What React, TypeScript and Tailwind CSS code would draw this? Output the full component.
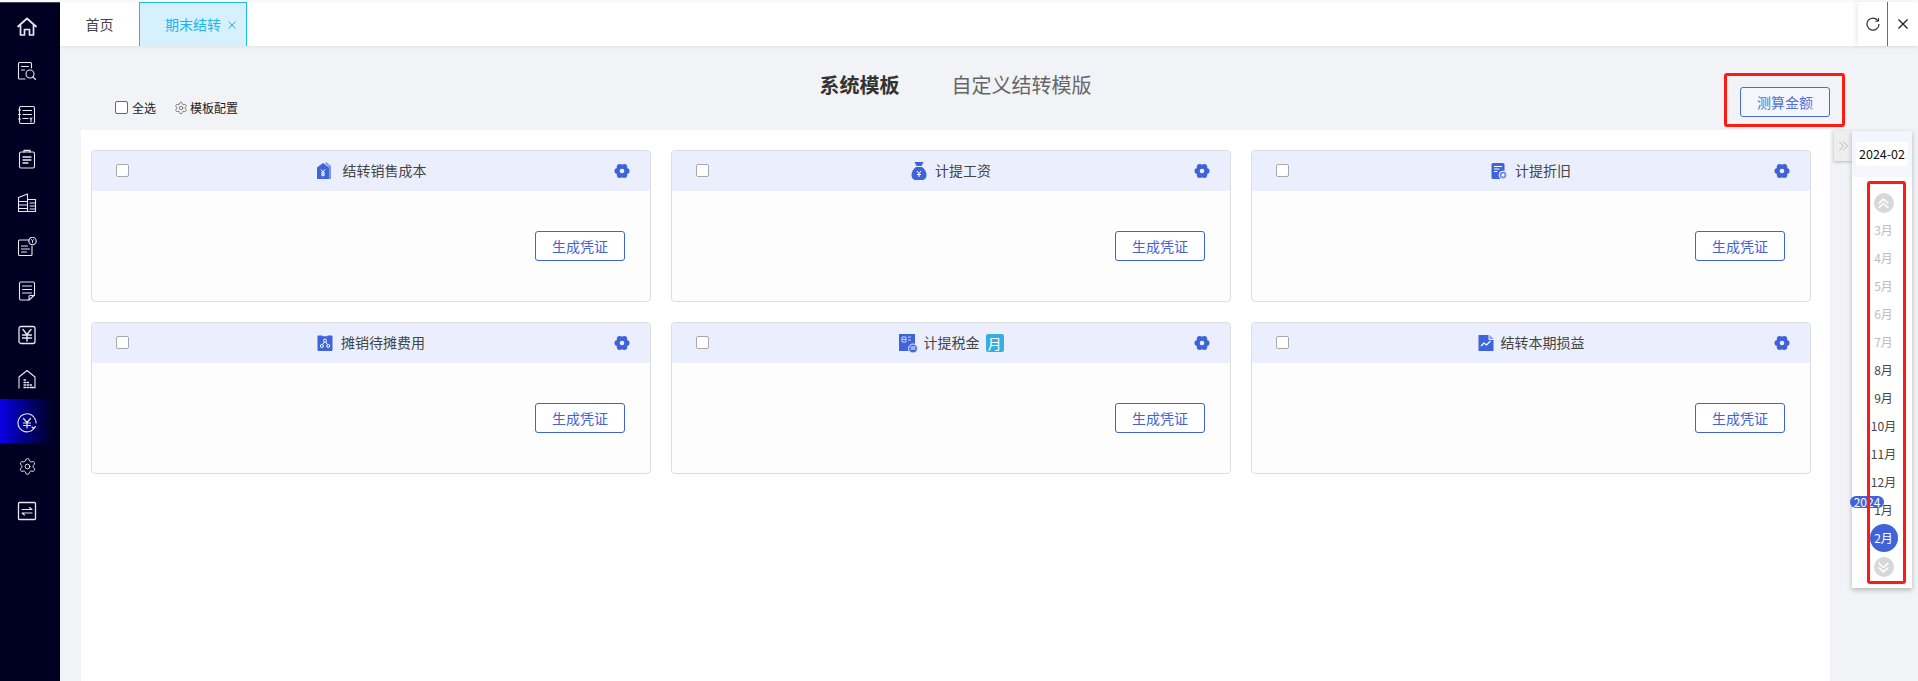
import React from "react";
import { Settings } from "lucide-react";

const FONT = "[font-family:'Noto_Sans_CJK_SC','Noto_Sans',sans-serif]";

type IconProps = { className?: string };

const Stroke: React.FC<{ children: React.ReactNode; className?: string }> = ({ children, className }) => (
  <svg viewBox="0 0 20 20" fill="none" stroke="currentColor" strokeWidth="1.1" strokeLinecap="round" strokeLinejoin="round" className={className ?? "w-5 h-5"}>
    {children}
  </svg>
);

const NavHome = () => (
  <svg viewBox="0 0 20 20" fill="none" stroke="currentColor" strokeWidth="1.7" strokeLinejoin="round" strokeLinecap="round" className="w-5 h-5">
    <path d="M1 9.500 10 1.500l9 8M3.500 8v10h4v-5.500h5V18h4V8" />
  </svg>
);
const NavSearchDoc = () => (
  <Stroke>
    <path d="M8 18H2.500a1 1 0 0 1-1-1V2.500a1 1 0 0 1 1-1h11a1 1 0 0 1 1 1V7" />
    <path d="M4.500 5.500h7M4.500 9h3" />
    <circle cx="13" cy="13" r="4" />
    <path d="m16 16 2.500 2.500" />
  </Stroke>
);
const NavLedger = () => (
  <Stroke>
    <rect x="2.500" y="1.500" width="15" height="17" rx="1.500" />
    <path d="M1.500 5h2M1.500 9.500h2M1.500 14h2M6 5.500h8.500M6 9.500h8.500M6 13.500h5M13 13l1 1.500 1-1.500M14 14.500V17" />
  </Stroke>
);
const NavClipboard = () => (
  <Stroke>
    <rect x="2.500" y="3" width="15" height="16" rx="1.500" />
    <path d="M7 3V1.500h6V3M6 8h8M6 11h8M6 14h5" strokeWidth="1.300" />
  </Stroke>
);
const NavBuilding = () => (
  <Stroke>
    <path d="M1.500 18.500V4.500L10.500 1v17.500M10.500 6.500h8v12h-17" />
    <path d="M1.500 8.500h9M1.500 12h9M1.500 15.500h9M13 10h5.500M13 13h5.500M13 16h5.500" />
  </Stroke>
);
const NavDocCoin = () => (
  <Stroke>
    <path d="M12 3H2.500a1 1 0 0 0-1 1v13.500a1 1 0 0 0 1 1H14a1 1 0 0 0 1-1V9" />
    <path d="M4.500 9h6M4.500 12h8M4.500 15h5" />
    <circle cx="15.500" cy="4" r="3.700" />
    <path d="M14.500 2.500l1 1.300 1-1.300M15.500 3.800v2" strokeWidth="0.900" />
  </Stroke>
);
const NavNote = () => (
  <Stroke>
    <path d="M12 19H4a1.500 1.500 0 0 1-1.500-1.500v-15A1.500 1.500 0 0 1 4 1h12a1.500 1.500 0 0 1 1.500 1.500V14L12 19Z" />
    <path d="M5.500 5h9M5.500 8.500h9M5.500 12h9M12 19v-3.500a1 1 0 0 1 1-1h4.500" />
  </Stroke>
);
const NavYenBox = () => (
  <Stroke>
    <rect x="2" y="1.500" width="16" height="17" rx="2" strokeWidth="1.300" />
    <path d="m6 4.500 4 5 4-5M10 9.500V16M5.500 10h9M5.500 13h9" strokeWidth="1.400" />
  </Stroke>
);
const NavHouse = () => (
  <Stroke>
    <path d="M2 19V8l8-6.500L18 8v11" />
    <path d="M7 11h1.500M7 13.500h1.500M7 16h1.500M7 18.500h1.500M10 13.500h1.500M10 16h1.500M10 18.500h1.500M13 16h1.500M13 18.500h4" strokeWidth="1.300" />
  </Stroke>
);
const NavYenCircle = () => (
  <Stroke>
    <path d="M17 15.500A9 9 0 1 1 19 10" strokeDasharray="16 1 30 1 40" />
    <path d="m6.500 5.500 3.500 4 3.500-4M10 9.500V15M6.500 10h7M6.500 12.500h7" strokeWidth="1.200" />
    <path d="m15 14 1.500 1.500 2-2" />
  </Stroke>
);
const NavGear = () => <Settings className="w-[19px] h-[19px]" strokeWidth={1.200} />;
const NavSwap = () => (
  <Stroke>
    <rect x="1.500" y="1.500" width="17" height="17" rx="1" strokeWidth="1.300" />
    <path d="M5 8.500h10l-2.500-2M15 12H5l2.500 2" strokeWidth="1.100" />
  </Stroke>
);

const NAV_ITEMS = [NavHome, NavSearchDoc, NavLedger, NavClipboard, NavBuilding, NavDocCoin, NavNote, NavYenBox, NavHouse, NavYenCircle, NavGear, NavSwap];

const Sidebar = () => (
  <aside className="w-[60px] shrink-0 bg-[#000022] text-[#e8e8f0] border-t border-t-[#44445a] mt-[2px]">
    {NAV_ITEMS.map((Icon, index) => (
      <div
        key={index}
        className={`h-[44px] flex items-center justify-center pr-[6px] pt-[3px] ${index === 9 ? "bg-gradient-to-r from-[#0c00e8] to-[#000022] to-90%" : ""}`}
      >
        <Icon />
      </div>
    ))}
  </aside>
);

const TabBar = () => (
  <div className="mt-[2px] h-[44px] bg-white flex items-stretch shadow-[0_1px_3px_rgba(0,0,0,0.08)] relative z-10">
    <div className="w-[79px] flex items-center justify-center text-[14px] text-[#444]">首页</div>
    <div className="w-[108px] flex items-center pl-[25px] gap-[6px] bg-[#d6f1fd] border border-b-0 border-[#19bdf0] text-[14px] text-[#22b4ee]">
      期末结转
      <svg viewBox="0 0 10 10" className="w-[10px] h-[10px]" fill="none" stroke="currentColor" strokeWidth="1">
        <path d="m1.500 1.500 7 7M8.500 1.500l-7 7" />
      </svg>
    </div>
    <div className="ml-auto flex shadow-[-3px_0_4px_rgba(0,0,0,0.06)]">
      <div className="w-[30px] flex items-center justify-center border-r border-r-[#4a6bd8] text-[#333]">
        <svg viewBox="0 0 14 14" className="w-[14px] h-[14px]" fill="none" stroke="currentColor" strokeWidth="1.200">
          <path d="M12 3.800A6 6 0 1 0 13 7" />
          <path d="M12.500 1v3.200H9.300" strokeWidth="1" />
        </svg>
      </div>
      <div className="w-[30px] flex items-center justify-center text-[#222]">
        <svg viewBox="0 0 12 12" className="w-[12px] h-[12px]" fill="none" stroke="currentColor" strokeWidth="1.300">
          <path d="m1.500 1.500 9 9M10.500 1.500l-9 9" />
        </svg>
      </div>
    </div>
  </div>
);

const CardGear = () => (
  <svg viewBox="0 0 16 16" className="w-[16px] h-[16px]">
    <g fill="#3f63d9">
      <circle cx="12.500" cy="8" r="3" />
      <circle cx="10.250" cy="11.900" r="3" />
      <circle cx="5.750" cy="11.900" r="3" />
      <circle cx="3.500" cy="8" r="3" />
      <circle cx="5.750" cy="4.100" r="3" />
      <circle cx="10.250" cy="4.100" r="3" />
      <circle cx="8" cy="8" r="4" />
    </g>
    <circle cx="8" cy="8" r="2.300" fill="#ebeffd" />
  </svg>
);

const TagIcon = ({ className }: IconProps) => (
  <svg viewBox="0 0 16 18" className={className}>
    <path fill="#7f98e8" d="M10 0l5 4v13h-2V5L9 1.500z" />
    <path fill="#3f63d9" d="M7 1l6 4.500V17H1V5.500z" />
    <path fill="none" stroke="#fff" strokeWidth="1" d="m5 7.500 2 2.500 2-2.500M7 10v4.500M5 11h4M5 13h4" />
  </svg>
);
const BagIcon = ({ className }: IconProps) => (
  <svg viewBox="0 0 16 18" className={className}>
    <path fill="#3f63d9" d="M3.500 0h9L10.500 4h-5zM5 5h6c3 2 4.500 5 4.500 8 0 3-2 5-4.500 5H5c-2.500 0-4.500-2-4.500-5 0-3 1.500-6 4.500-8z" />
    <path fill="none" stroke="#fff" strokeWidth="1" d="m6 9 2 2.500L10 9M8 11.500V15M6 12.500h4" />
  </svg>
);
const ReportIcon = ({ className }: IconProps) => (
  <svg viewBox="0 0 16 16" className={className}>
    <rect x="0.500" y="0" width="13" height="16" rx="1.500" fill="#3f63d9" />
    <path stroke="#fff" strokeWidth="1" d="M3 3.500h8M3 6h5.500M3 8.500h3.500" />
    <circle cx="12" cy="12" r="4" fill="#6f8ce6" stroke="#ebeffd" strokeWidth="1" />
    <circle cx="12" cy="12" r="1.500" fill="#fff" />
  </svg>
);
const ShareIcon = ({ className }: IconProps) => (
  <svg viewBox="0 0 16 16" className={className}>
    <path fill="#3f63d9" d="M1.500 0.500h4v.8h5v-.8h4A1 1 0 0 1 15.500 1.500v13.500a1 1 0 0 1-1 1h-13a1 1 0 0 1-1-1V1.500a1 1 0 0 1 1-1z" />
    <g fill="none" stroke="#fff" strokeWidth="1">
      <circle cx="8" cy="5.500" r="1.500" />
      <circle cx="4.800" cy="11" r="1.500" />
      <circle cx="11.200" cy="11" r="1.500" />
      <path d="M7.200 7 5.600 9.600M8.800 7l1.600 2.600" />
    </g>
  </svg>
);
const TaxIcon = ({ className }: IconProps) => (
  <svg viewBox="0 0 19 19" className={className}>
    <rect x="0" y="0" width="16" height="17" fill="#3f63d9" />
    <path stroke="#c7d3f7" strokeWidth="1" fill="none" d="M3 3h4v5H3zM3 5.500h4M9 3h3M9 6h3" />
    <circle cx="14" cy="14.500" r="4.500" fill="#3f63d9" stroke="#ebeffd" strokeWidth="1" />
    <path stroke="#fff" strokeWidth="1" d="M11.500 13h5M11.500 15h5" />
  </svg>
);
const ChartIcon = ({ className }: IconProps) => (
  <svg viewBox="0 0 16 16" className={className}>
    <path fill="#3f63d9" d="M0.500 0h10v5h5v11H.500z" />
    <path fill="#7f98e8" d="M11.500 0l4 4h-4z" />
    <path fill="none" stroke="#fff" strokeWidth="1.300" d="M3 11l3-3 2.500 2 4-4" />
  </svg>
);

const Checkbox = () => (
  <span className="block w-[13px] h-[13px] rounded-[2px] bg-white border-[1.5px] border-[#a8a8a8]" />
);

const CARDS = [
  { title: "结转销售成本", Icon: TagIcon, size: "w-[16px] h-[18px]", gap: "gap-[11px]" },
  { title: "计提工资", Icon: BagIcon, size: "w-[16px] h-[18px]", gap: "gap-[8px]" },
  { title: "计提折旧", Icon: ReportIcon, size: "w-[16px] h-[16px]", gap: "gap-[8px]" },
  { title: "摊销待摊费用", Icon: ShareIcon, size: "w-[16px] h-[16px]", gap: "gap-[8px]" },
  { title: "计提税金", Icon: TaxIcon, size: "w-[19px] h-[19px]", gap: "gap-[6px]", badge: "月" },
  { title: "结转本期损益", Icon: ChartIcon, size: "w-[16px] h-[16px]", gap: "gap-[7px]" },
];

const TemplateCard: React.FC<(typeof CARDS)[number]> = ({ title, Icon, size, gap, badge }) => (
  <div className="h-[152px] rounded-[4px] border border-[#dcdde1] bg-[#fdfdfd]">
    <div className={`relative h-[40px] rounded-t-[4px] rounded-b-[3px] bg-[#ebeffd] flex items-center justify-center ${gap} text-[14px] text-[#444]`}>
      <span className="absolute left-[24px] top-[13px]">
        <Checkbox />
      </span>
      <Icon className={size} />
      <span className="pb-[2px]">{title}</span>
      {badge && (
        <span className="w-[18px] h-[18px] rounded-[2px] bg-[#36aee0] text-white flex items-center justify-center">{badge}</span>
      )}
      <span className="absolute right-[20px] top-[12px]">
        <CardGear />
      </span>
    </div>
    <div className="flex justify-end pt-[40px] pr-[25px]">
      <button className="w-[90px] h-[30px] rounded-[3px] border border-[#3f63d9] text-[14px] text-[#3f63d9] bg-white">生成凭证</button>
    </div>
  </div>
);

const PageHeader = () => (
  <div className="h-[84px] grid grid-cols-[1fr_auto_1fr] ">
    <div className="flex items-center gap-[18px] pl-[34px] pt-[39px] text-[12px] text-[#222]">
      <span className="flex items-center gap-[4px]">
        <span className="block w-[13px] h-[13px] rounded-[2px] bg-white border border-[#666]" />
        全选
      </span>
      <span className="flex items-center gap-[2px]">
        <Settings className="w-[14px] h-[14px] text-[#555]" strokeWidth={1.200} />
        模板配置
      </span>
    </div>
    <div className="flex items-start gap-[52px] pt-[24px] text-[20px] leading-[30px]">
      <span className="font-bold text-[#333]">系统模板</span>
      <span className="text-[#666]">自定义结转模版</span>
    </div>
    <div className="relative flex justify-end items-start pt-[41px]">
      <button className="w-[90px] h-[30px] rounded-[3px] border border-[#4a6bd8] text-[14px] text-[#4f72dc] bg-[#f5f6fc]">测算金额</button>
      <span className="absolute right-[-15px] top-[27px] w-[121px] h-[54px] rounded-[3px] border-[3px] border-[#ff1a12]" />
    </div>
  </div>
);

const Chevrons: React.FC<{ direction: "up" | "down" }> = ({ direction }) => (
  <span className="w-[20px] h-[20px] rounded-full bg-[#d8d8d8] flex items-center justify-center text-white">
    <svg viewBox="0 0 12 12" className="w-[13px] h-[13px]" fill="none" stroke="currentColor" strokeWidth="1.500">
      <path d={direction === "up" ? "M1.500 6 6 2l4.500 4M1.500 10 6 6l4.500 4" : "M1.500 2 6 6l4.500-4M1.500 6 6 10l4.500-4"} />
    </svg>
  </span>
);

const MONTHS = [
  { label: "3月", disabled: true },
  { label: "4月", disabled: true },
  { label: "5月", disabled: true },
  { label: "6月", disabled: true },
  { label: "7月", disabled: true },
  { label: "8月" },
  { label: "9月" },
  { label: "10月" },
  { label: "11月" },
  { label: "12月" },
  { label: "1月" },
  { label: "2月", active: true },
];

const MonthRail = () => (
  <div className="w-[88px] shrink-0 pl-[4px] pt-[85px] flex items-start">
    <div className="w-[18px] h-[30px] bg-[#eeeeee] shadow-[0_1px_3px_rgba(0,0,0,0.25)] flex items-center justify-center text-[#bbb]">
      <svg viewBox="0 0 12 12" className="w-[12px] h-[12px]" fill="none" stroke="currentColor" strokeWidth="1">
        <path d="m2 1.500 4.500 4.500L2 10.500M6 1.500l4.500 4.500L6 10.500" />
      </svg>
    </div>
    <div className="relative w-[60px] h-[457px] bg-white shadow-[0_2px_5px_rgba(0,0,0,0.25)]">
      <div className="h-[46px] bg-[#f5f6fc] flex items-center justify-center">
        <span className="w-[52px] h-[24px] rounded-[4px] bg-white flex items-center justify-center text-[12.500px] text-[#111]">2024-02</span>
      </div>
      <div className="flex flex-col items-center pl-[3px] pt-[16px] text-[12px] text-[#444]">
        <Chevrons direction="up" />
        <div className="mt-[3px] mb-[5px]">
          {MONTHS.map((month) => (
            <div key={month.label} className="h-[28px] flex items-center justify-center">
              {month.active ? (
                <span className="w-[28px] h-[28px] rounded-full bg-[#3f63d9] text-white flex items-center justify-center">{month.label}</span>
              ) : (
                <span className={month.disabled ? "text-[#bdbdbd]" : ""}>{month.label}</span>
              )}
            </div>
          ))}
        </div>
        <Chevrons direction="down" />
      </div>
      <span className="absolute left-[-2px] top-[365px] w-[34px] h-[12px] rounded-full bg-[#3f63d9] text-white text-[12px] leading-[12px] text-center">2024</span>
      <span className="absolute left-[15px] top-[50px] w-[39px] h-[403px] rounded-[3px] border-[3px] border-[#ff1a12]" />
    </div>
  </div>
);

export default function App() {
  return (
    <div className={`h-screen flex overflow-hidden bg-[#fafafa] ${FONT}`}>
      <Sidebar />
      <div className="flex-1 min-w-0 flex flex-col">
        <TabBar />
        <div className="flex-1 min-h-0 flex bg-[#f2f3f6]">
          <div className="flex-1 min-w-0 ml-[21px] flex flex-col">
            <PageHeader />
            <div className="flex-1 bg-white pl-[10px] pr-[19px] pt-[20px]">
              <div className="grid grid-cols-3 gap-x-[20px] gap-y-[20px]">
                {CARDS.map((card) => (
                  <TemplateCard key={card.title} {...card} />
                ))}
              </div>
            </div>
          </div>
          <MonthRail />
        </div>
      </div>
    </div>
  );
}
